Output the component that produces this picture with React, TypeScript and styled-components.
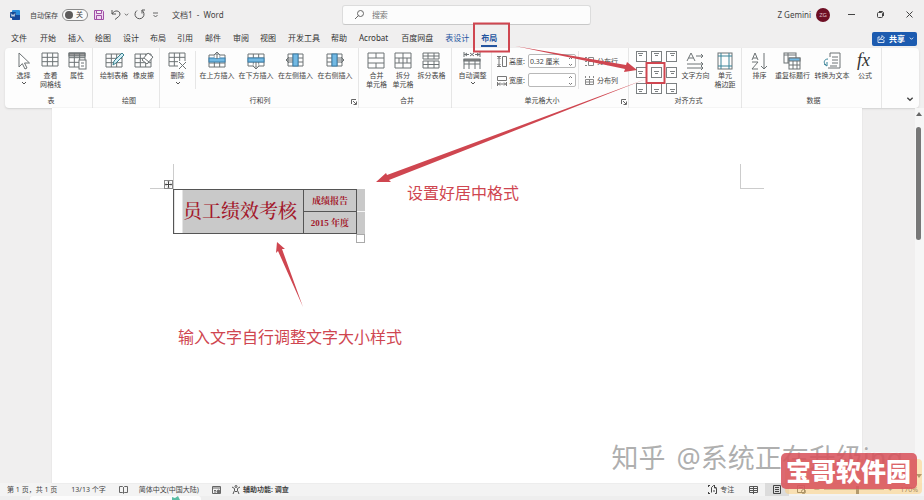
import React from "react";
import styled, { createGlobalStyle } from "styled-components";

const Global = createGlobalStyle`
  * { box-sizing: border-box; }
  body { margin: 0; background: #f0efef; }
  body, button, input {
    font-family: "Noto Sans", "Noto Sans CJK SC", sans-serif;
    color: #444;
  }
  button { border: 0; background: none; padding: 0; }
`;

const red = "#cf4650";

const Shell = styled.div`
  position: relative;
  display: flex;
  flex-direction: column;
  min-height: 100vh;
  overflow: hidden;
`;

const TitleBar = styled.header`
  display: grid;
  grid-template-columns: 37fr 27fr 36fr;
  align-items: center;
  height: 29px;
`;

const QuickAccess = styled.div`
  display: flex;
  align-items: center;
  padding-left: 10px;
  font-size: 7px;
  white-space: nowrap;
`;

const AutoSave = styled.label`
  display: flex;
  align-items: center;
  gap: 4px;
  margin: 0 6px 0 10px;
`;

const Switch = styled.span`
  display: flex;
  align-items: center;
  justify-content: space-between;
  width: 26px;
  height: 12px;
  padding: 0 4px 0 2px;
  border: 1px solid #8a8a8a;
  border-radius: 6px;
  background: #fafafa;
  line-height: 10px;
`;

const SwitchInput = styled.input`
  appearance: none;
  width: 8px;
  height: 8px;
  margin: 0;
  border-radius: 50%;
  background: #5d5b5b;
`;

const IconButton = styled.button<{ $gap?: number }>`
  display: flex;
  align-items: center;
  justify-content: center;
  margin-left: ${(p) => p.$gap ?? 0}px;
`;

const DocName = styled.span`
  margin-left: 14px;
  font-size: 8px;
`;

const Search = styled.label`
  display: flex;
  align-items: center;
  gap: 8px;
  height: 20px;
  padding: 0 12px;
  border: 1px solid #dcdcdc;
  border-bottom-color: #c8c8c8;
  border-radius: 3px;
  background: #fcfcfc;
`;

const SearchInput = styled.input`
  flex: 1;
  min-width: 0;
  padding: 0;
  border: 0;
  outline: 0;
  background: none;
  font-size: 8px;
  &::placeholder { color: #777; opacity: 1; }
`;

const WindowArea = styled.div`
  display: flex;
  align-items: center;
  justify-content: flex-end;
  padding-right: 11px;
  font-size: 8px;
`;

const Avatar = styled.span`
  width: 14px;
  height: 14px;
  margin: 0 0 0 5px;
  border-radius: 50%;
  background: #6e0f24;
  color: #dcb9c0;
  font-size: 6px;
  line-height: 14px;
  text-align: center;
`;

const TabRow = styled.nav`
  display: flex;
  align-items: center;
  height: 19px;
  padding: 0 7px 0 11px;
`;

const Tab = styled.button<{ $gap: number; $tone?: "context" | "active" }>`
  height: 17px;
  margin-right: ${(p) => p.$gap}px;
  border-bottom: 2px solid ${(p) => (p.$tone === "active" ? "#24559f" : "transparent")};
  color: ${(p) => (p.$tone ? "#24559f" : "#333")};
  font-size: 8px;
  font-weight: ${(p) => (p.$tone === "active" ? 700 : 400)};
  line-height: 15px;
  white-space: nowrap;
`;

const Share = styled.button`
  display: flex;
  align-items: center;
  gap: 4px;
  height: 14px;
  margin-left: auto;
  padding: 0 3px 0 5px;
  border-radius: 2px;
  background: #1c5bb0;
  color: #fff;
  font-size: 8px;
  font-weight: 700;
  line-height: 14px;
`;

const Ribbon = styled.section`
  display: flex;
  height: 60px;
  margin: 0 5px;
  border-radius: 4px;
  background: #fdfdfd;
  box-shadow: 0 1px 2px #d0d0d0;
`;

const Group = styled.div<{ $width: number; $pad?: number }>`
  position: relative;
  display: flex;
  flex-direction: column;
  justify-content: space-between;
  flex: 0 0 ${(p) => p.$width}px;
  padding: 3px 0 2px ${(p) => p.$pad ?? 4}px;
  border-right: 1px solid #e6e6e6;
`;

const GroupTools = styled.div`
  display: flex;
  height: 44px;
`;

const GroupName = styled.div`
  font-size: 7px;
  line-height: 10px;
  text-align: center;
`;

const Launcher = styled.button`
  position: absolute;
  right: 1px;
  bottom: 3px;
  display: flex;
`;

const Tool = styled.button<{ $width: number }>`
  display: flex;
  flex-direction: column;
  align-items: center;
  flex: 0 0 ${(p) => p.$width}px;
  font-size: 7px;
  line-height: 9px;
  white-space: nowrap;
`;

const ToolIcon = styled.span`
  display: flex;
  height: 20px;
  padding-top: 1px;
`;

const Rule = styled.span`
  width: 1px;
  height: 38px;
  margin: 0 2px;
  background: #e6e6e6;
`;

const SizeFields = styled.div`
  display: flex;
  flex-direction: column;
  gap: 5px;
  padding: 3px 0 0 3px;
`;

const SizeField = styled.label`
  display: flex;
  align-items: center;
  gap: 2px;
  height: 14px;
  font-size: 7px;
  white-space: nowrap;
`;

const Spin = styled.span`
  display: flex;
  align-items: center;
  width: 48px;
  height: 14px;
  margin-left: 1px;
  padding-right: 2px;
  border: 1px solid #b8b8b8;
  border-radius: 2px;
  background: #fff;
`;

const SpinInput = styled.input`
  flex: 1;
  min-width: 0;
  padding: 0 0 0 1px;
  border: 0;
  outline: 0;
  background: none;
  font-size: 7px;
`;

const Distribute = styled.button`
  display: flex;
  align-items: center;
  gap: 3px;
  height: 14px;
  padding-left: 1px;
  font-size: 7px;
  white-space: nowrap;
`;

const AlignGrid = styled.div`
  display: grid;
  grid-template-columns: repeat(3, 11px);
  gap: 5px 4px;
  align-content: start;
  margin-right: 3px;
`;

const RibbonEnd = styled.div`
  display: flex;
  flex: 1;
  align-items: flex-end;
  justify-content: flex-end;
  padding: 0 5px 5px 0;
`;

const Workspace = styled.main`
  position: relative;
  display: grid;
  grid-template-columns: 52px 1fr 53px 9px;
  flex: 1;
`;

const Page = styled.article`
  grid-column: 2;
  padding: 56px 98px 0;
  background: #fff;
  box-shadow: 0 0 1px #ccc;
`;

const Corners = styled.div`
  display: flex;
  justify-content: space-between;
`;

const Corner = styled.span<{ $side: "left" | "right" }>`
  width: 24px;
  height: 25px;
  border-bottom: 1px solid #ccc;
  border-${(p) => (p.$side === "left" ? "right" : "left")}: 1px solid #ccc;
`;

const TableWrap = styled.div`
  position: relative;
  display: flex;
  width: max-content;
  margin-left: 23px;
`;

const DocTable = styled.table`
  border-collapse: collapse;
  background: #c9c9c9;
  color: #a3182b;
  font-family: "Liberation Serif", "Noto Serif CJK SC", "Noto Sans CJK SC", serif;
  td {
    height: 22px;
    padding: 0;
    border: 1px solid #555;
    text-align: center;
    white-space: nowrap;
  }
`;

const TitleCell = styled.td`
  width: 130px;
  background: linear-gradient(90deg, #fff 8px, #c9c9c9 8px);
  font-size: 19px;
  font-weight: 500;
  line-height: 24px;
  && { padding-left: 3px; }
`;

const SmallCell = styled.td`
  width: 53px;
  font-size: 9px;
  font-weight: 700;
  line-height: 12px;
`;

const RowEnds = styled.span`
  width: 8px;
  background: linear-gradient(#c9c9c9 22px, #f4f4f4 22px, #f4f4f4 23px, #c9c9c9 23px);
`;

const MoveHandle = styled.span`
  position: absolute;
  left: -9px;
  top: -9px;
  display: flex;
`;

const ResizeHandle = styled.span`
  position: absolute;
  right: 0;
  top: 45px;
  width: 9px;
  height: 9px;
  border: 1px solid #aaa;
  background: #fff;
`;

const Note = styled.p<{ $x: number; $y: number }>`
  position: absolute;
  left: ${(p) => p.$x}px;
  top: ${(p) => p.$y}px;
  margin: 0;
  color: ${red};
  font-size: 16px;
  line-height: 24px;
  white-space: nowrap;
`;

const Scrollbar = styled.div`
  grid-column: 4;
  display: flex;
  flex-direction: column;
  align-items: center;
  padding: 3px 2px 4px 0;
  background: #f6f6f6;
`;

const Thumb = styled.span`
  width: 5px;
  height: 113px;
  margin: 10px 0 auto;
  border-radius: 3px;
  background: #777;
`;

const StatusBar = styled.footer`
  display: flex;
  align-items: center;
  height: 13px;
  padding: 0 6px 0 7px;
  background: #f3f3f3;
  font-size: 7px;
  line-height: 13px;
  white-space: nowrap;
`;

const StatusItem = styled.span<{ $gap: number; $strong?: boolean }>`
  display: flex;
  align-items: center;
  gap: 3px;
  margin-right: ${(p) => p.$gap}px;
  font-weight: ${(p) => (p.$strong ? 600 : 400)};
`;

const StatusRight = styled.div`
  display: flex;
  align-items: center;
  margin-left: auto;
`;

const ViewButton = styled.button<{ $on?: boolean }>`
  display: flex;
  align-items: center;
  justify-content: center;
  width: 24px;
  height: 13px;
  background: ${(p) => (p.$on ? "#dcdcdc" : "transparent")};
`;

const ZoomSlider = styled.input`
  appearance: none;
  width: 60px;
  height: 1px;
  margin: 0 4px;
  background: #aaa;
  &::-webkit-slider-thumb {
    appearance: none;
    width: 3px;
    height: 8px;
    background: #666;
  }
`;

const TaskStrip = styled.div`
  display: flex;
  height: 4px;
  padding-left: 30px;
  background: #eeeeee;
`;

const TaskSearch = styled.span`
  display: flex;
  justify-content: center;
  width: 171px;
  padding-left: 120px;
  border-radius: 3px 3px 0 0;
  background: #fcfcfc;
`;

const Overlay = styled.svg`
  position: absolute;
  left: 0;
  top: 0;
  pointer-events: none;
`;

const Watermark = styled.div`
  position: absolute;
  right: 21px;
  bottom: 23px;
  display: flex;
  gap: 11px;
  z-index: 3;
  color: rgba(140, 140, 140, 0.7);
  font-size: 27px;
  line-height: 38px;
  text-shadow: -1px -1px 0 rgba(255, 255, 255, 0.6);
  white-space: nowrap;
  pointer-events: none;
`;

const BadgeBack = styled.div`
  position: absolute;
  right: 2px;
  bottom: 6px;
  width: 137px;
  height: 35px;
  border-radius: 4px;
  background: rgba(255, 205, 115, 0.5);
  pointer-events: none;
`;

const Badge = styled.div`
  position: absolute;
  right: 7px;
  bottom: 11px;
  z-index: 4;
  padding: 0 6px 0 5px;
  border-radius: 5px;
  background: rgba(216, 84, 93, 0.88);
  color: #fff;
  font-size: 25px;
  font-weight: 900;
  line-height: 36px;
  white-space: nowrap;
`;

type Kind =
  | "select" | "grid" | "props" | "draw" | "erase" | "delete"
  | "above" | "below" | "left" | "right" | "merge" | "split"
  | "splitTable" | "autofit" | "direction" | "margins" | "sort"
  | "repeat" | "convert" | "fx";

const Grid = ({ x = 1, y = 1, w = 16, h = 13 }) => (
  <path d={`M${x} ${y}h${w}v${h}h${-w}zM${x} ${y + h / 3}h${w}M${x} ${y + (2 * h) / 3}h${w}M${x + w / 3} ${y}v${h}M${x + (2 * w) / 3} ${y}v${h}`} />
);

const blue = "#73b9e3";

const drawings: Record<Kind, React.ReactNode> = {
  select: <path d="M5 1v14l3.3-3.4L11 17l2-1-2.5-5h5z" fill="#fff" />,
  grid: <Grid />,
  props: (
    <>
      <rect x="1" y="1" width="16" height="3" fill="#999" />
      <Grid y={1} h={14} />
      <rect x="11" y="8" width="7" height="9" fill="#fff" />
      <path d="M13 11h3M13 14h3" />
    </>
  ),
  draw: (
    <>
      <Grid y={2} />
      <path d="M8 13l1-4 8-8 2 2-8 8z" fill="#d2edf6" stroke="#39828f" />
    </>
  ),
  erase: (
    <>
      <Grid y={2} />
      <path d="M8 8l6-7 5 4-6 7z" fill="#fff" />
      <path d="M10 6l5 4" />
    </>
  ),
  delete: (
    <>
      <Grid />
      <path d="M10 9h8v8h-8z" fill="#fff" stroke="none" />
      <path d="M11 10l7 7M18 10l-7 7" />
    </>
  ),
  above: (
    <>
      <Grid y={3} h={12} />
      <rect x="1" y="6" width="16" height="4" fill={blue} stroke="#3b80ad" />
      <path d="M6.500 3h5v3h-5z" fill="#fff" stroke="none" />
      <path d="M9 7V0M6 3l3-3 3 3" />
    </>
  ),
  below: (
    <>
      <Grid y={2} h={12} />
      <rect x="1" y="6" width="16" height="4" fill={blue} stroke="#3b80ad" />
      <path d="M6.500 11.500h5v3h-5z" fill="#fff" stroke="none" />
      <path d="M9 10v7M6 14l3 3 3-3" />
    </>
  ),
  left: (
    <>
      <Grid x={2} y={2} w={15} h={12} />
      <rect x="7" y="2" width="5" height="12" fill={blue} stroke="#3b80ad" />
      <path d="M7 8H0M3 5L0 8l3 3" />
    </>
  ),
  right: (
    <>
      <Grid y={2} w={15} h={12} />
      <rect x="6" y="2" width="5" height="12" fill={blue} stroke="#3b80ad" />
      <path d="M11 8h7M15 5l3 3-3 3" />
    </>
  ),
  merge: <path d="M1 1h16v15H1zM1 6h16M1 11h16M9 1v5M9 11v5" />,
  split: <path d="M1 1h16v15H1zM1 6h16M1 11h16M9 1v5M9 11v5M5 6v5M9 6v5M13 6v5" />,
  splitTable: <path d="M1 1h16v6H1zM1 4h16M6 1v6M12 1v6M1 9h16v7H1zM1 12.500h16M6 9v7M12 9v7" />,
  autofit: (
    <>
      <path d="M1 0v5M17 0v5M1 2.500h5M17 2.500h-5M4 1L2 2.500 4 4M14 1l2 1.500L14 4M7 1l4 3M11 1L7 4" />
      <rect x="1" y="7" width="16" height="2" fill="#888" />
      <path d="M1 7v10M17 7v10M1 12h16M6 9v8M12 9v8" />
    </>
  ),
  direction: <path d="M1 9l4-8 4 8M2.500 6h5M10 4h7M15 2l2 2-2 2M1 12h16M15 10l2 2-2 2M1 16h16M15 14l2 2-2 2" />,
  margins: (
    <>
      <rect x="2" y="1" width="14" height="16" />
      <path d="M5 1v16M13 1v16M2 4h14M2 14h14" stroke="#398398" />
    </>
  ),
  sort: <path d="M2 8l3-7 3 7M3 6h4M2 10h6l-6 7h6M14 1v16M11 14l3 3 3-3" />,
  repeat: (
    <>
      <rect x="1" y="1" width="12" height="10" />
      <path d="M1 3h12M5 1v10" />
      <rect x="6" y="6" width="11" height="11" fill="#fff" />
      <rect x="6" y="6" width="11" height="3" fill={blue} />
      <path d="M6 13h11M10 9v8M14 9v8" />
    </>
  ),
  convert: (
    <>
      <path d="M7 5V1h10v15H5M9 5h6M9 8h6M9 11h6M7 14h7" />
      <path d="M5 7c-4 0-5 4-2 6M1 12l3 2 0-4" stroke="#398398" />
    </>
  ),
  fx: (
    <text x="1" y="14" fontSize="18" fontStyle="italic" fontFamily="Liberation Serif, serif" fill="#333" stroke="none">fx</text>
  ),
};

const Drawing = ({ kind }: { kind: Kind }) => (
  <svg width="19" height="18" viewBox="0 0 19 18" fill="none" stroke="#6d7375" strokeWidth="1" overflow="visible" aria-hidden="true">
    {drawings[kind]}
  </svg>
);

const Chevron = ({ size = 5, color = "#555" }) => (
  <svg width={size} height={size} viewBox="0 0 6 6" fill="none" stroke={color} aria-hidden="true">
    <path d="M1 2l2 2 2-2" />
  </svg>
);

const ToolButton = ({ kind, lines, width, menu }: { kind: Kind; lines: string[]; width: number; menu?: boolean }) => (
  <Tool $width={width}>
    <ToolIcon><Drawing kind={kind} /></ToolIcon>
    {lines.map((line) => <span key={line}>{line}</span>)}
    {menu && <Chevron size={6} />}
  </Tool>
);

const LauncherButton = () => (
  <Launcher aria-label="更多选项">
    <svg width="6" height="6" viewBox="0 0 6 6" fill="none" stroke="#666"><path d="M.5 5V.5H5M2 2l3 3M5.500 2.500v3h-3" /></svg>
  </Launcher>
);

const AlignIcon = ({ index }: { index: number }) => {
  const y = 3 + Math.floor(index / 3) * 2;
  const x = 2 + (index % 3);
  return (
    <svg width="11" height="11" viewBox="0 0 11 11" fill="none" stroke="#7c8082">
      <rect x=".5" y=".5" width="10" height="10" fill="#fff" />
      <path d={`M${x} ${y - 0.5}h5M${x + 1} ${y + 1.5}h3`} />
    </svg>
  );
};

const SpinArrows = () => (
  <svg width="5" height="11" viewBox="0 0 5 11" fill="none" stroke="#777" aria-hidden="true">
    <path d="M1 3l1.500-1.500L4 3M1 8l1.500 1.500L4 8" />
  </svg>
);

const tabs: { name: string; gap: number; tone?: "context" | "active" }[] = [
  { name: "文件", gap: 13 }, { name: "开始", gap: 12 }, { name: "插入", gap: 11 },
  { name: "绘图", gap: 12 }, { name: "设计", gap: 11 }, { name: "布局", gap: 11 },
  { name: "引用", gap: 12 }, { name: "邮件", gap: 12 }, { name: "审阅", gap: 11 },
  { name: "视图", gap: 12 }, { name: "开发工具", gap: 11 }, { name: "帮助", gap: 12 },
  { name: "Acrobat", gap: 13 }, { name: "百度网盘", gap: 12 },
  { name: "表设计", gap: 12, tone: "context" }, { name: "布局", gap: 0, tone: "active" },
];

export default function App() {
  return (
    <Shell>
      <Global />
      <TitleBar>
        <QuickAccess>
          <svg width="10" height="10" viewBox="0 0 10 10" aria-label="Word">
            <rect x="2" width="8" height="10" rx="1" fill="#2b8cda" />
            <path d="M2 5h8v4a1 1 0 0 1-1 1H3a1 1 0 0 1-1-1z" fill="#174a9b" />
            <rect y="2" width="6" height="6" rx="1" fill="#164b96" />
            <path d="M1 3.500l1 3 1-2 1 2 1-3" fill="none" stroke="#fff" strokeWidth=".7" />
          </svg>
          <AutoSave>
            自动保存
            <Switch><SwitchInput type="checkbox" />关</Switch>
          </AutoSave>
          <IconButton aria-label="保存">
            <svg width="10" height="10" viewBox="0 0 10 10" fill="#f0d9f1" stroke="#a14fa6"><path d="M.5.5h8l1 1v8h-9zM2.500.500v3h5v-3M2.500 9.500v-4h5v4" /></svg>
          </IconButton>
          <IconButton $gap={7} aria-label="撤消">
            <svg width="10" height="11" viewBox="0 0 10 11" fill="none" stroke="#555"><path d="M1 1v4h4M1 5c3-5 8-3 8 0 0 2-2 3-5 5.500" /></svg>
          </IconButton>
          <IconButton $gap={3} aria-label="撤消选项"><Chevron /></IconButton>
          <IconButton $gap={5} aria-label="重复">
            <svg width="11" height="11" viewBox="0 0 11 11" fill="none" stroke="#555"><path d="M3 1.500a4.500 4.500 0 1 0 5 0M8 4.500v-3.500h3" /></svg>
          </IconButton>
          <IconButton $gap={8} aria-label="自定义">
            <svg width="5" height="6" viewBox="0 0 5 6" fill="none" stroke="#666"><path d="M0 1h5M.5 3l2 2 2-2" /></svg>
          </IconButton>
          <DocName>文档1 &nbsp;-&nbsp; Word</DocName>
        </QuickAccess>
        <Search>
          <svg width="9" height="9" viewBox="0 0 9 9" fill="none" stroke="#666"><circle cx="5.500" cy="3.500" r="3" /><path d="M3.500 5.500L0 9" /></svg>
          <SearchInput placeholder="搜索" aria-label="搜索" />
        </Search>
        <WindowArea>
          <span>Z Gemini</span>
          <Avatar>ZG</Avatar>
          <IconButton $gap={18} aria-label="最小化"><svg width="7" height="7" stroke="#444"><path d="M0 3.500h7" /></svg></IconButton>
          <IconButton $gap={22} aria-label="还原">
            <svg width="7" height="7" viewBox="0 0 7 7" fill="none" stroke="#444"><rect x=".5" y="1.500" width="5" height="5" rx="1" /><path d="M2 .5h3.500l1 1V5" /></svg>
          </IconButton>
          <IconButton $gap={22} aria-label="关闭"><svg width="7" height="7" viewBox="0 0 7 7" stroke="#444"><path d="M.5.5l6 6M6.500.5l-6 6" /></svg></IconButton>
        </WindowArea>
      </TitleBar>

      <TabRow>
        {tabs.map((t, i) => <Tab key={i} $gap={t.gap} $tone={t.tone}>{t.name}</Tab>)}
        <Share>
          <svg width="8" height="8" viewBox="0 0 8 8" fill="none" stroke="#fff" strokeWidth=".8"><path d="M3 2H1v5.500h6V5M2.500 5C3 3 4 2.500 5 2.500V.5L7.500 3 5 5V4C4 4 3 4.500 2.500 5z" /></svg>
          共享
          <Chevron color="#fff" />
        </Share>
      </TabRow>

      <Ribbon>
        <Group $width={88} $pad={5}>
          <GroupTools>
            <ToolButton kind="select" lines={["选择"]} width={27} menu />
            <ToolButton kind="grid" lines={["查看", "网格线"]} width={27} />
            <ToolButton kind="props" lines={["属性"]} width={26} />
          </GroupTools>
          <GroupName>表</GroupName>
        </Group>
        <Group $width={67} $pad={6}>
          <GroupTools>
            <ToolButton kind="draw" lines={["绘制表格"]} width={30} />
            <ToolButton kind="erase" lines={["橡皮擦"]} width={29} />
          </GroupTools>
          <GroupName>绘图</GroupName>
        </Group>
        <Group $width={199} $pad={2}>
          <GroupTools>
            <ToolButton kind="delete" lines={["删除"]} width={31} menu />
            <Rule />
            <ToolButton kind="above" lines={["在上方插入"]} width={38} />
            <ToolButton kind="below" lines={["在下方插入"]} width={40} />
            <ToolButton kind="left" lines={["在左侧插入"]} width={39} />
            <ToolButton kind="right" lines={["在右侧插入"]} width={40} />
          </GroupTools>
          <GroupName>行和列</GroupName>
          <LauncherButton />
        </Group>
        <Group $width={93}>
          <GroupTools>
            <ToolButton kind="merge" lines={["合并", "单元格"]} width={27} />
            <ToolButton kind="split" lines={["拆分", "单元格"]} width={26} />
            <ToolButton kind="splitTable" lines={["拆分表格"]} width={31} />
          </GroupTools>
          <GroupName>合并</GroupName>
        </Group>
        <Group $width={177}>
          <GroupTools>
            <ToolButton kind="autofit" lines={["自动调整"]} width={33} menu />
            <Rule />
            <SizeFields>
              <SizeField>
                <svg width="10" height="11" viewBox="0 0 10 11" fill="none" stroke="#777"><path d="M0 .5h4M0 10.500h4M2 1v9M.5 3L2 1.500 3.500 3M.5 8L2 9.500 3.500 8M5.500.5h4v10h-4z" /></svg>
                高度:
                <Spin><SpinInput defaultValue="0.32 厘米" /><SpinArrows /></Spin>
              </SizeField>
              <SizeField>
                <svg width="10" height="11" viewBox="0 0 10 11" fill="none" stroke="#777"><path d="M.5 1.500h9v4h-9zM.5 7v4M9.500 7v4M1 9h8M3 7.500L1.500 9 3 10.500M7 7.500L8.500 9 7 10.500" /></svg>
                宽度:
                <Spin><SpinInput defaultValue="" /><SpinArrows /></Spin>
              </SizeField>
            </SizeFields>
            <Rule />
            <SizeFields>
              <Distribute>
                <svg width="9" height="9" viewBox="0 0 9 9" fill="none" stroke="#888"><path d="M0 .5h2M0 4.500h2M0 8.500h2M3.500.5h5v8h-5zM3.500 4.500h5" /></svg>
                分布行
              </Distribute>
              <Distribute>
                <svg width="9" height="9" viewBox="0 0 9 9" fill="none" stroke="#888"><path d="M.5 0v2M4.500 0v2M8.500 0v2M.5 3.500h8v5h-8zM4.500 3.500v5M.5 6h8" /></svg>
                分布列
              </Distribute>
            </SizeFields>
          </GroupTools>
          <GroupName>单元格大小</GroupName>
          <LauncherButton />
        </Group>
        <Group $width={113} $pad={7}>
          <GroupTools>
            <AlignGrid>
              {Array.from({ length: 9 }, (_, i) => (
                <IconButton key={i} aria-label={`对齐方式 ${i + 1}`}><AlignIcon index={i} /></IconButton>
              ))}
            </AlignGrid>
            <ToolButton kind="direction" lines={["文字方向"]} width={31} />
            <ToolButton kind="margins" lines={["单元", "格边距"]} width={28} />
          </GroupTools>
          <GroupName>对齐方式</GroupName>
        </Group>
        <Group $width={140}>
          <GroupTools>
            <ToolButton kind="sort" lines={["排序"]} width={27} />
            <ToolButton kind="repeat" lines={["重复标题行"]} width={39} />
            <ToolButton kind="convert" lines={["转换为文本"]} width={40} />
            <ToolButton kind="fx" lines={["公式"]} width={26} />
          </GroupTools>
          <GroupName>数据</GroupName>
        </Group>
        <RibbonEnd>
          <IconButton aria-label="折叠功能区"><Chevron size={8} color="#444" /></IconButton>
        </RibbonEnd>
      </Ribbon>

      <Workspace>
        <Page>
          <Corners><Corner $side="left" /><Corner $side="right" /></Corners>
          <TableWrap>
            <DocTable>
              <tbody>
                <tr><TitleCell rowSpan={2}>员工绩效考核</TitleCell><SmallCell>成绩报告</SmallCell></tr>
                <tr><SmallCell>2015 年度</SmallCell></tr>
              </tbody>
            </DocTable>
            <RowEnds />
            <MoveHandle>
              <svg width="9" height="9" viewBox="0 0 9 9" fill="#fff" stroke="#888"><rect x=".5" y=".5" width="8" height="8" /><path d="M4.500 1v7M1 4.500h7" stroke="#444" /><path d="M3 2.500L4.500 1 6 2.500M3 6.500L4.500 8 6 6.500M2.500 3L1 4.500 2.500 6M6.500 3L8 4.500 6.500 6" fill="none" strokeWidth=".6" /></svg>
            </MoveHandle>
            <ResizeHandle />
          </TableWrap>
        </Page>
        <Note $x={407} $y={73}>设置好居中格式</Note>
        <Note $x={178} $y={217}>输入文字自行调整文字大小样式</Note>
        <Scrollbar>
          <svg width="6" height="6" fill="#666"><path d="M3 1l3 4H0z" /></svg>
          <Thumb />
          <svg width="6" height="6" fill="#666"><path d="M3 5L0 1h6z" /></svg>
        </Scrollbar>
      </Workspace>

      <StatusBar>
        <StatusItem $gap={14}>第 1 页，共 1 页</StatusItem>
        <StatusItem $gap={13}>13/13 个字</StatusItem>
        <StatusItem $gap={11}>
          <svg width="9" height="8" viewBox="0 0 9 8" fill="none" stroke="#666"><path d="M.5.5h3l1 1 1-1h3v6h-3l-1 1-1-1h-3zM4.500 1v6" /></svg>
        </StatusItem>
        <StatusItem $gap={13}>简体中文(中国大陆)</StatusItem>
        <StatusItem $gap={11}>
          <svg width="9" height="8" viewBox="0 0 9 8" fill="none" stroke="#666"><path d="M.5.5h8v7h-8zM0 2h9M2 4.500h2M2 6h2" /><circle cx="6.500" cy="5.500" r="1.500" fill="#666" /></svg>
        </StatusItem>
        <StatusItem $gap={0} $strong>
          <svg width="8" height="9" viewBox="0 0 8 9" fill="none" stroke="#555"><circle cx="4" cy="1.500" r="1" /><path d="M0 2l2.500 1.500v2L1 9M8 2L5.500 3.500v2L7 9M2.500 5.500L4 7l1.500-1.500" /></svg>
          辅助功能: 调查
        </StatusItem>
        <StatusRight>
          <StatusItem $gap={7}>
            <svg width="9" height="9" viewBox="0 0 9 9" fill="none" stroke="#444"><path d="M0 .5h2M.5 0v2M0 8.500h2M.5 7v2M3.500 7.500v-5l2-2 3 3v5H7M6.500 0v3h2.500M5 6h2" /></svg>
            专注
          </StatusItem>
          <ViewButton aria-label="阅读视图"><svg width="9" height="8" viewBox="0 0 9 8" fill="none" stroke="#555"><path d="M.5.5h8v6h-8zM4.500 0v8M1 2.500h7M1 4.500h7" /></svg></ViewButton>
          <ViewButton $on aria-label="页面视图"><svg width="8" height="9" viewBox="0 0 8 9" fill="none" stroke="#444"><path d="M.5.5h7v8h-7zM2 2.500h4M2 4.500h4M2 6.500h4" /></svg></ViewButton>
          <ViewButton aria-label="Web 视图"><svg width="9" height="9" viewBox="0 0 9 9" fill="none" stroke="#555"><path d="M.5.5h7v7h-7zM2 2.500h4" /><circle cx="6.500" cy="6.500" r="2" /></svg></ViewButton>
          <StatusItem $gap={0}>－</StatusItem>
          <ZoomSlider type="range" min={10} max={300} defaultValue={170} aria-label="缩放" />
          <StatusItem $gap={8}>+</StatusItem>
          <span>170%</span>
        </StatusRight>
      </StatusBar>
      <TaskStrip><TaskSearch><svg width="8" height="4" fill="#5bbda4"><path d="M0 4V1l3 1 3-2 2 4z" /></svg></TaskSearch></TaskStrip>

      <BadgeBack />
      <Watermark><span>知乎</span><span>@系统正在升级ing</span></Watermark>
      <Badge>宝哥软件园</Badge>

      <Overlay width="700" height="320" viewBox="0 0 700 320">
        <rect x="474" y="23.500" width="35" height="28" fill="none" stroke={red} strokeWidth="2" />
        <rect x="646.500" y="63" width="18" height="20" fill="none" stroke={red} strokeWidth="2" />
        <path d="M515 46L626 65l1-3 10 8-13 2 1-3z" fill={red} />
        <path d="M646 79L389 180l2 2-15 0 10-9 1 2z" fill={red} />
        <path d="M303 307L278 251l-2 2 1-11 8 7-3 0z" fill={red} />
      </Overlay>
    </Shell>
  );
}
